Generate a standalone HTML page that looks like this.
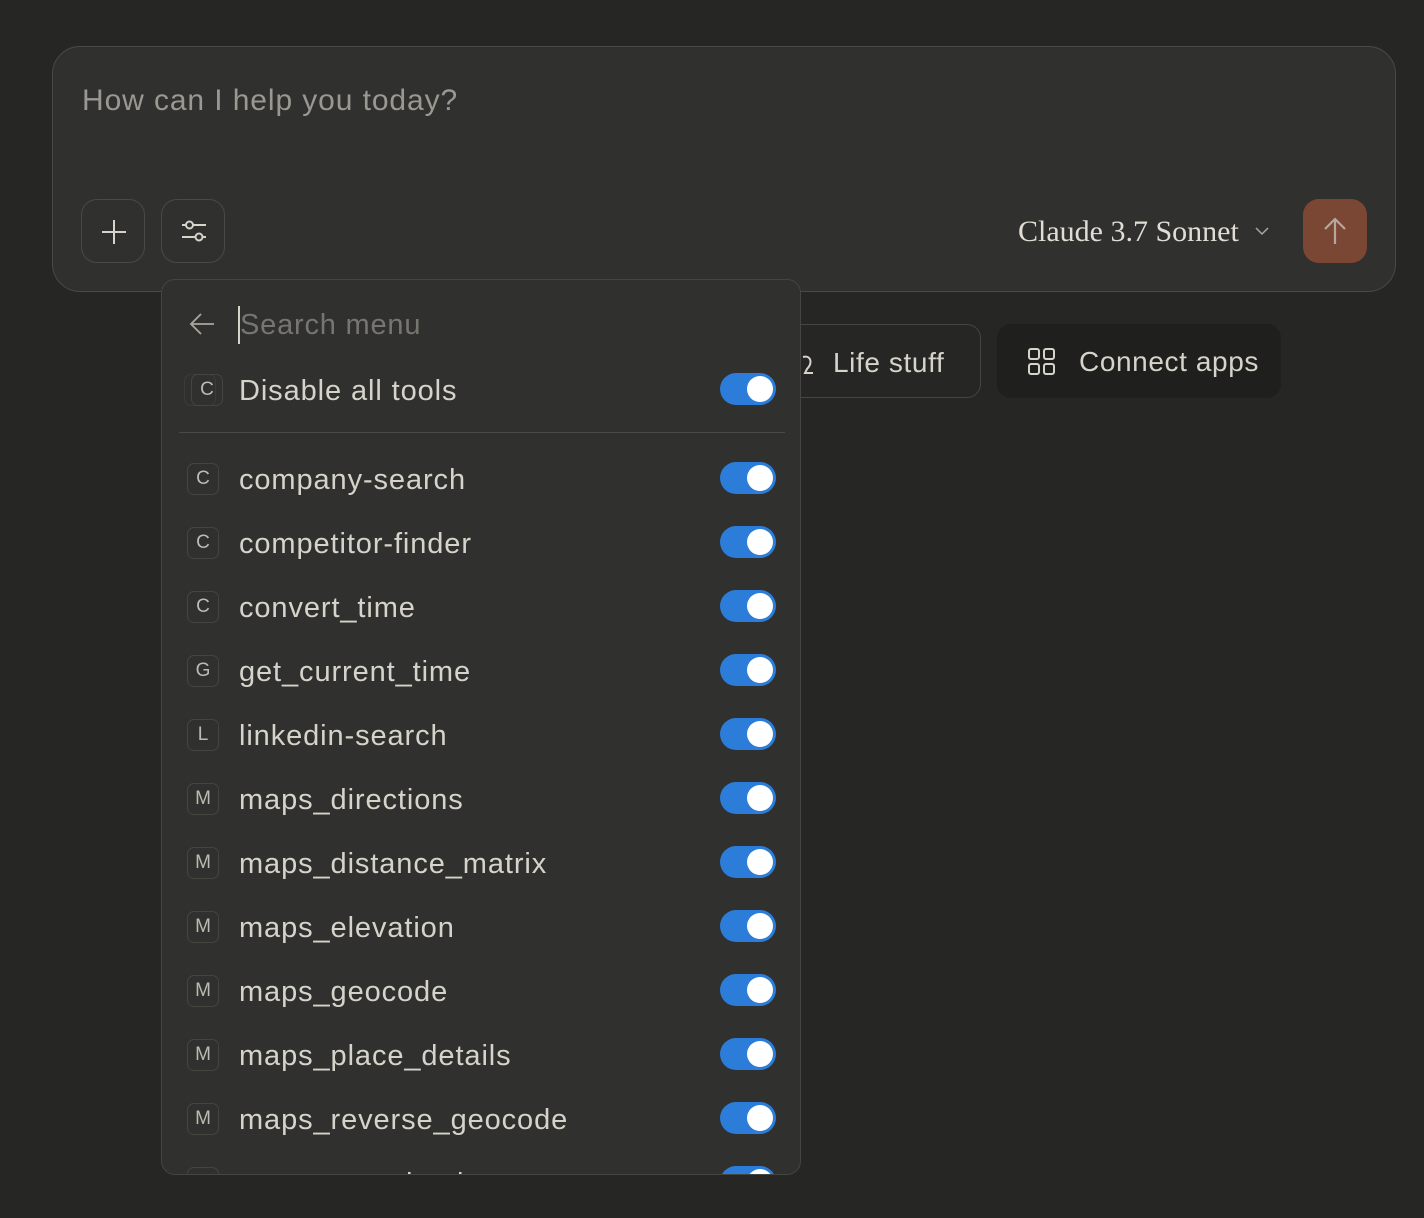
<!DOCTYPE html>
<html><head><style>
*{box-sizing:border-box;margin:0;padding:0}
body{width:1424px;height:1218px;background:#262624;font-family:"Liberation Sans",sans-serif;position:relative;overflow:hidden;color:#c9c6bd}
.box{position:absolute;left:52px;top:46px;width:1344px;height:246px;background:#30302e;border:1.5px solid #4a4944;border-radius:28px}
.ph{position:absolute;left:82px;top:84px;font-size:30px;color:#9a9891;letter-spacing:.9px}
.btn{position:absolute;top:199px;width:64px;height:64px;border:1.5px solid #4a4944;border-radius:16px}
.send{position:absolute;left:1303px;top:199px;width:64px;height:64px;background:#7b4735;border-radius:16px}
.model{position:absolute;left:1018px;top:215px;font-family:"Liberation Serif",serif;font-size:30px;color:#e0ddd4;letter-spacing:0px}
.pill{position:absolute;top:324px;height:74px;border-radius:14px;font-size:28px;color:#d6d3ca;line-height:76px;letter-spacing:.6px}
.menu{position:absolute;left:161px;top:279px;width:640px;height:896px;background:#30302e;border:1.5px solid #46453f;border-radius:14px;overflow:hidden}
.row{position:absolute;left:0;width:640px;height:40px}
.ic{position:absolute;left:25px;top:4px;width:32px;height:32px;border:1.5px solid #45443f;border-radius:7px;font-size:19px;color:#bdbab1;text-align:center;line-height:29px}
.lb{position:absolute;left:77px;top:5px;font-size:29px;color:#d6d3ca;letter-spacing:.9px}
.tg{position:absolute;left:558px;top:3px;width:56px;height:32px;border-radius:16px;background:#2c7cd9}
.tg::after{content:"";position:absolute;right:3px;top:3px;width:26px;height:26px;border-radius:50%;background:#fff}
</style></head><body>
<div class="box"></div>
<div class="ph">How can I help you today?</div>
<div class="btn" style="left:81px"><svg width="64" height="64"><path d="M32 20v24M20 32h24" stroke="#d6d3ca" stroke-width="2"/></svg></div>
<div class="btn" style="left:161px"><svg width="64" height="64"><path d="M20 25h24M20 37h24" stroke="#d6d3ca" stroke-width="2"/><circle cx="27.5" cy="25" r="3.5" fill="#30302e" stroke="#d6d3ca" stroke-width="2"/><circle cx="37" cy="37" r="3.5" fill="#30302e" stroke="#d6d3ca" stroke-width="2"/></svg></div>
<div class="model">Claude 3.7 Sonnet</div>
<svg style="position:absolute;left:1254px;top:225px" width="16" height="12"><path d="M2 3l6 6 6-6" fill="none" stroke="#aaa79f" stroke-width="1.5"/></svg>
<div class="send"><svg width="64" height="64"><path d="M32 45V20M22 30l10-10 10 10" fill="none" stroke="#b8a69e" stroke-width="2.2"/></svg></div>
<div class="pill" style="left:760px;width:221px;border:1.5px solid #46453f;padding-left:72px">Life stuff
<svg style="position:absolute;left:38px;top:28px" width="20" height="24"><path d="M4 4c8-2 10 6 4 12l-2 4h8" fill="none" stroke="#d6d3ca" stroke-width="2"/></svg></div>
<div class="pill" style="left:997px;width:284px;background:#1f1f1d;padding-left:82px">Connect apps
<svg style="position:absolute;left:30px;top:23px" width="30" height="30"><g fill="none" stroke="#d6d3ca" stroke-width="2"><rect x="2" y="2" width="10" height="10" rx="2"/><rect x="17" y="2" width="10" height="10" rx="2"/><rect x="2" y="17" width="10" height="10" rx="2"/><rect x="17" y="17" width="10" height="10" rx="2"/></g></svg></div>
<div class="menu">
<svg style="position:absolute;left:26px;top:32px" width="28" height="24"><path d="M26 12H3M13 2L3 12l10 10" fill="none" stroke="#a9a69e" stroke-width="1.8"/></svg>
<div style="position:absolute;left:76px;top:26px;width:2px;height:38px;background:#d6d3ca"></div>
<div style="position:absolute;left:78px;top:29px;font-size:29px;color:#77756f;letter-spacing:.8px">Search menu</div>
<div class="row" style="top:90px"><div class="ic" style="left:22px;border-color:#3c3b37"></div><div class="ic" style="left:29px">C</div><div class="lb">Disable all tools</div><div class="tg"></div></div>
<div style="position:absolute;left:17px;top:152px;width:606px;height:1px;background:#4a4944"></div>
<div class="row" style="top:179px"><div class="ic">C</div><div class="lb">company-search</div><div class="tg"></div></div>
<div class="row" style="top:243px"><div class="ic">C</div><div class="lb">competitor-finder</div><div class="tg"></div></div>
<div class="row" style="top:307px"><div class="ic">C</div><div class="lb">convert_time</div><div class="tg"></div></div>
<div class="row" style="top:371px"><div class="ic">G</div><div class="lb">get_current_time</div><div class="tg"></div></div>
<div class="row" style="top:435px"><div class="ic">L</div><div class="lb">linkedin-search</div><div class="tg"></div></div>
<div class="row" style="top:499px"><div class="ic">M</div><div class="lb">maps_directions</div><div class="tg"></div></div>
<div class="row" style="top:563px"><div class="ic">M</div><div class="lb">maps_distance_matrix</div><div class="tg"></div></div>
<div class="row" style="top:627px"><div class="ic">M</div><div class="lb">maps_elevation</div><div class="tg"></div></div>
<div class="row" style="top:691px"><div class="ic">M</div><div class="lb">maps_geocode</div><div class="tg"></div></div>
<div class="row" style="top:755px"><div class="ic">M</div><div class="lb">maps_place_details</div><div class="tg"></div></div>
<div class="row" style="top:819px"><div class="ic">M</div><div class="lb">maps_reverse_geocode</div><div class="tg"></div></div>
<div class="row" style="top:883px"><div class="ic">M</div><div class="lb">maps_search_places</div><div class="tg"></div></div>
</div>
</body></html>
